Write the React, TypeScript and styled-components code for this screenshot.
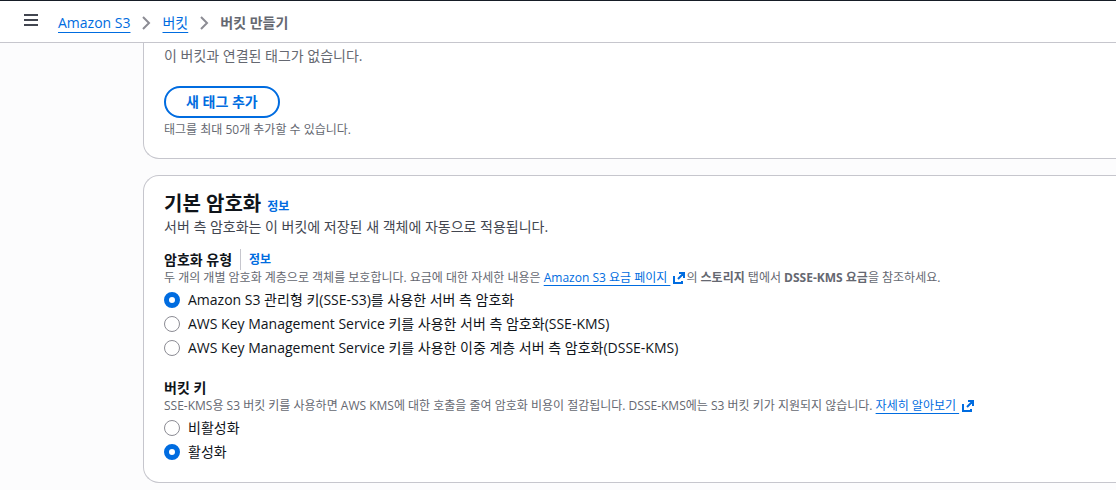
import React, { useState } from "react";
import styled, { createGlobalStyle } from "styled-components";

const BLUE = "#006ce0";
const INK = "#0f141a";
const MUTED = "#656871";
const LINE = "#c6c6cd";

const GlobalStyle = createGlobalStyle`
  *, *::before, *::after { box-sizing: border-box; }
  body {
    margin: 0;
    background: #fcfcfd;
    color: ${INK};
    font-family: "Open Sans", "Noto Sans CJK KR", sans-serif;
    font-size: 14px;
    line-height: 20px;
  }
`;

const Header = styled.header`
  display: flex;
  align-items: center;
  gap: 16px;
  height: 43px;
  padding: 0 20px;
  background: #fff;
  border-top: 1px solid #161d26;
  border-bottom: 1px solid ${LINE};
`;

const MenuButton = styled.button`
  display: flex;
  padding: 4px;
  margin-bottom: 4px;
  border: 0;
  background: none;
  color: #424650;
  cursor: pointer;
`;

const Crumbs = styled.ol`
  display: flex;
  align-items: center;
  margin: 0;
  padding: 2px 0 0;
  list-style: none;
`;

const Crumb = styled.li<{ $current?: boolean }>`
  display: flex;
  align-items: center;
  color: ${MUTED};
  font-weight: ${(p) => (p.$current ? 700 : 400)};
`;

const Chevron = styled.svg`
  margin: 0 8px;
  color: #8c8c94;
`;

const Link = styled.a`
  color: ${BLUE};
  text-decoration: underline;
  text-decoration-thickness: 1px;
  text-decoration-skip-ink: none;
  text-underline-offset: 4px;
`;

const InfoLink = styled.a`
  color: ${BLUE};
  font-size: 12px;
  font-weight: 700;
  text-decoration: none;
`;

const Main = styled.main`
  display: flex;
  flex-direction: column;
  gap: 16px;
  padding: 0 0 7px 143px;
`;

const Card = styled.section<{ $continued?: boolean }>`
  padding: ${(p) => (p.$continued ? "3px 20px 20px" : "15px 20px 20px")};
  background: #fff;
  border: 1px solid ${LINE};
  border-right: 0;
  border-top-width: ${(p) => (p.$continued ? 0 : 1)}px;
  border-radius: ${(p) => (p.$continued ? "0 0 0 16px" : "16px 0 0 16px")};
`;

const Text = styled.p`
  margin: 0;
  color: #424650;
`;

const Empty = styled(Text)`
  color: ${MUTED};
`;

const Hint = styled.p`
  margin: 0;
  color: ${MUTED};
  font-size: 12px;
  line-height: 16px;

  ${Link} {
    text-underline-offset: 3px;
  }
`;

const AddButton = styled.button`
  display: block;
  margin: 20px 0 4px;
  padding: 4px 20px;
  border: 2px solid ${BLUE};
  border-radius: 20px;
  background: #fff;
  color: ${BLUE};
  font: inherit;
  font-weight: 700;
  cursor: pointer;
`;

const TitleRow = styled.div`
  display: flex;
  align-items: baseline;
  gap: 6px;
`;

const Title = styled.h2`
  margin: 0;
  font-size: 20px;
  line-height: 26px;
  font-weight: 700;
`;

const Field = styled.fieldset`
  min-width: 0;
  margin: 12px 0 0;
  padding: 0;
  border: 0;

  & + & {
    margin-top: 20px;
  }
`;

const Legend = styled.legend`
  display: flex;
  align-items: center;
  padding: 0;
  font-weight: 700;
`;

const LegendInfo = styled.span`
  margin-left: 8px;
  padding-left: 8px;
  border-left: 1px solid ${LINE};
`;

const Options = styled.div`
  display: grid;
  gap: 4px;
  margin-top: 4px;
`;

const Option = styled.label`
  display: flex;
  align-items: center;
  gap: 8px;
  justify-self: start;
`;

const Radio = styled.input`
  appearance: none;
  flex: none;
  width: 16px;
  height: 16px;
  margin: 0;
  border: 1px solid #8c8c94;
  border-radius: 50%;
  background: #fff;

  &:checked {
    border: 5px solid ${BLUE};
  }
`;

const ExternalSvg = styled.svg`
  margin-left: 2px;
  vertical-align: -3px;
  color: ${BLUE};
`;

function ExternalIcon() {
  return (
    <ExternalSvg width="14" height="14" viewBox="0 0 14 14" fill="none" stroke="currentColor" strokeWidth="2" aria-hidden="true">
      <path d="M7 2h5v5M12 2 6 8M2 5v7h8v-2" />
    </ExternalSvg>
  );
}

function Separator() {
  return (
    <Chevron width="16" height="16" viewBox="0 0 16 16" fill="none" stroke="currentColor" strokeWidth="2" aria-hidden="true">
      <path d="m5 2 6 6-6 6" />
    </Chevron>
  );
}

type RadioListProps = { name: string; options: string[]; initial: number };

function RadioList({ name, options, initial }: RadioListProps) {
  const [selected, setSelected] = useState(initial);
  return (
    <Options>
      {options.map((label, i) => (
        <Option key={label}>
          <Radio type="radio" name={name} checked={selected === i} onChange={() => setSelected(i)} />
          {label}
        </Option>
      ))}
    </Options>
  );
}

export default function App() {
  return (
    <>
      <GlobalStyle />
      <Header>
        <MenuButton type="button" aria-label="메뉴">
          <svg width="14" height="12" viewBox="0 0 14 12" fill="none" stroke="currentColor" strokeWidth="2">
            <path d="M0 1h14M0 6h14M0 11h14" />
          </svg>
        </MenuButton>
        <nav>
          <Crumbs>
            <Crumb><Link href="#s3">Amazon S3</Link><Separator /></Crumb>
            <Crumb><Link href="#buckets">버킷</Link><Separator /></Crumb>
            <Crumb $current>버킷 만들기</Crumb>
          </Crumbs>
        </nav>
      </Header>
      <Main>
        <Card $continued>
          <Empty>이 버킷과 연결된 태그가 없습니다.</Empty>
          <AddButton type="button">새 태그 추가</AddButton>
          <Hint>태그를 최대 50개 추가할 수 있습니다.</Hint>
        </Card>
        <Card>
          <TitleRow>
            <Title>기본 암호화</Title>
            <InfoLink href="#info">정보</InfoLink>
          </TitleRow>
          <Text>서버 측 암호화는 이 버킷에 저장된 새 객체에 자동으로 적용됩니다.</Text>
          <Field>
            <Legend>
              암호화 유형
              <LegendInfo><InfoLink href="#type-info">정보</InfoLink></LegendInfo>
            </Legend>
            <Hint>
              두 개의 개별 암호화 계층으로 객체를 보호합니다. 요금에 대한 자세한 내용은{" "}
              <Link href="#pricing">Amazon S3 요금 페이지&nbsp;</Link>
              <ExternalIcon />의 <b>스토리지</b> 탭에서 <b>DSSE-KMS 요금</b>을 참조하세요.
            </Hint>
            <RadioList
              name="encryption"
              initial={0}
              options={[
                "Amazon S3 관리형 키(SSE-S3)를 사용한 서버 측 암호화",
                "AWS Key Management Service 키를 사용한 서버 측 암호화(SSE-KMS)",
                "AWS Key Management Service 키를 사용한 이중 계층 서버 측 암호화(DSSE-KMS)",
              ]}
            />
          </Field>
          <Field>
            <Legend>버킷 키</Legend>
            <Hint>
              SSE-KMS용 S3 버킷 키를 사용하면 AWS KMS에 대한 호출을 줄여 암호화 비용이 절감됩니다. DSSE-KMS에는 S3 버킷 키가 지원되지 않습니다.{" "}
              <Link href="#learn">자세히 알아보기&nbsp;</Link>
              <ExternalIcon />
            </Hint>
            <RadioList name="bucket-key" initial={1} options={["비활성화", "활성화"]} />
          </Field>
        </Card>
      </Main>
    </>
  );
}
